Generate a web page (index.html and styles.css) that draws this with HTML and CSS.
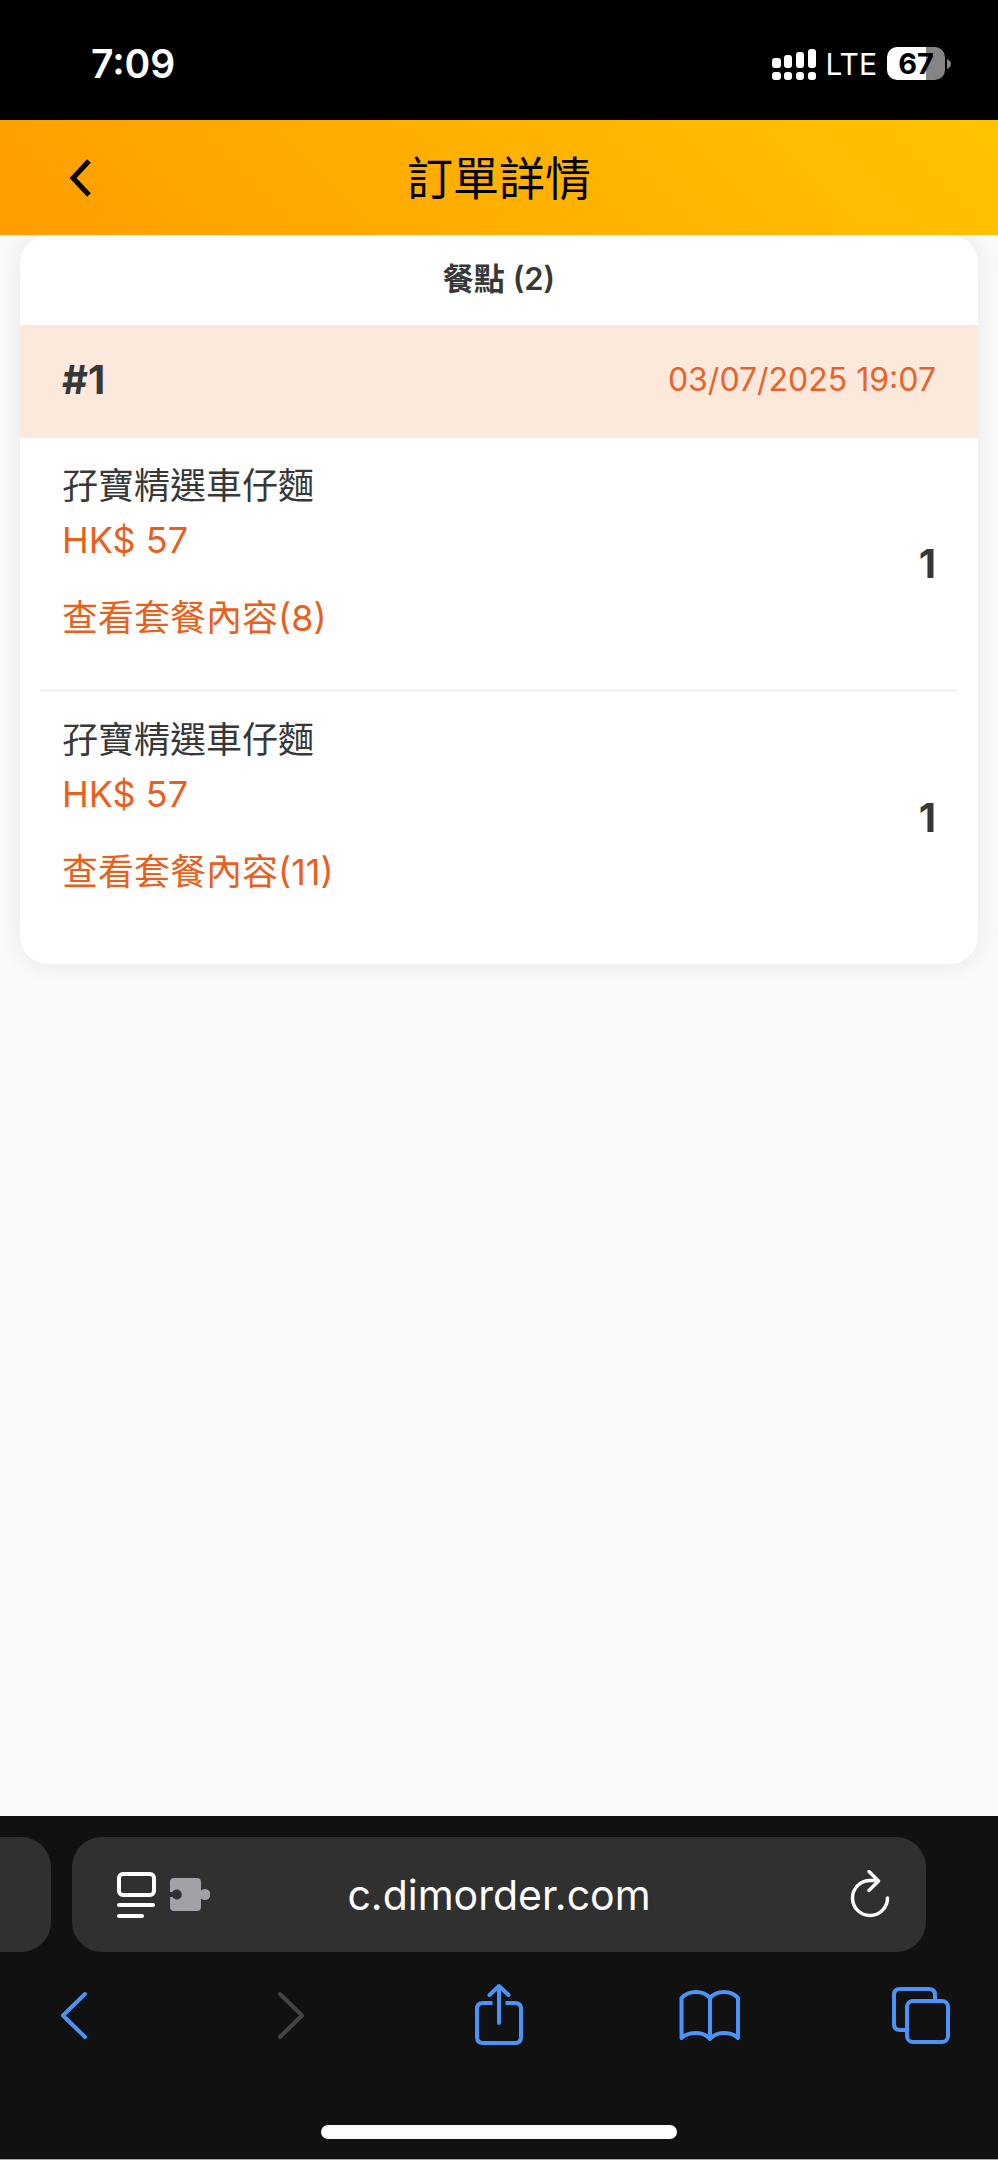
FILE: index.html
```html
<!DOCTYPE html>
<html lang="zh-Hant">
<head>
<meta charset="utf-8">
<meta name="viewport" content="width=device-width, initial-scale=1">
<title>訂單詳情</title>
<link rel="stylesheet" href="styles.css">
</head>
<body>
<div class="status">
  <time class="status-time">7:09</time>
  <div class="status-right">
    <svg class="signal" width="44" height="32" viewBox="0 0 44 32" fill="#fff" aria-hidden="true">
      <rect x="0" y="10" width="9" height="10" rx="3"/><rect x="12" y="7" width="8" height="13" rx="3"/><rect x="24" y="4" width="8" height="16" rx="3"/><rect x="36" y="1" width="8" height="19" rx="3"/>
      <rect x="0" y="24" width="9" height="8" rx="3"/><rect x="12" y="24" width="8" height="8" rx="3"/><rect x="24" y="24" width="8" height="8" rx="3"/><rect x="36" y="24" width="8" height="8" rx="3"/>
    </svg>
    <span class="network">LTE</span>
    <div class="battery">
      <span class="battery-level">67</span>
      <svg width="4" height="10" viewBox="0 0 4 10" aria-hidden="true"><path d="M0 0Q4 2 4 5T0 10Z" fill="#858585"/></svg>
    </div>
  </div>
</div>

<header class="header">
  <button class="header-back" type="button" aria-label="返回">
    <svg width="24" height="38" viewBox="0 0 24 38" fill="none" stroke="#000" stroke-width="5" aria-hidden="true"><path d="M20 2 4 19 20 36"/></svg>
  </button>
  <h1 class="header-title">訂單詳情</h1>
</header>

<main class="content">
  <section class="card">
    <h2 class="card-title">餐點 (2)</h2>
    <div class="batch">
      <strong class="batch-number">#1</strong>
      <time class="batch-time">03/07/2025 19:07</time>
    </div>
    <ul class="items">
      <li class="item">
        <div class="item-info">
          <div class="item-name">孖寶精選車仔麵</div>
          <div class="item-price">HK$ 57</div>
          <button class="item-more" type="button">查看套餐內容(8)</button>
        </div>
        <strong class="item-count">1</strong>
      </li>
      <li class="item">
        <div class="item-info">
          <div class="item-name">孖寶精選車仔麵</div>
          <div class="item-price">HK$ 57</div>
          <button class="item-more" type="button">查看套餐內容(11)</button>
        </div>
        <strong class="item-count">1</strong>
      </li>
    </ul>
  </section>
</main>

<footer class="browser">
  <div class="tabs">
    <div class="tab-previous"></div>
    <div class="address">
      <button class="page-menu" type="button" aria-label="頁面選單">
        <svg width="94" height="48" viewBox="0 0 94 48" aria-hidden="true">
          <g fill="none" stroke="#fff" stroke-linecap="round">
            <rect x="3" y="3" width="35" height="21" rx="4" stroke-width="4"/>
            <path d="M3 34H37M3 45H26" stroke-width="4"/>
          </g>
          <path fill="#a2a1a8" d="M58 7H81Q85 7 85 11V19.500Q86.500 18 89 18A5.500 5.500 0 0 1 89 29Q86.500 29 85 27.500V36Q85 40 81 40H58Q54 40 54 36V26H56.500A5 5 0 1 0 56.500 21H54V11Q54 7 58 7Z"/>
        </svg>
      </button>
      <input class="address-input" type="text" aria-label="網址" value="c.dimorder.com">
      <button class="reload" type="button" aria-label="重新載入">
        <svg width="40" height="50" viewBox="0 0 40 50" fill="none" stroke="#fff" stroke-width="3.500" stroke-linecap="round" stroke-linejoin="round" aria-hidden="true"><path d="M37.500 28A17.500 17.500 0 1 1 20 10.500H28M19 1.500 28.500 11 19 20.500"/></svg>
      </button>
    </div>
  </div>
  <nav class="toolbar" aria-label="瀏覽器工具列">
    <button class="tool" type="button" aria-label="上一頁">
      <svg viewBox="0 0 62 64"><path d="M42 12 20 33.500 42 55"/></svg>
    </button>
    <button class="tool tool-off" type="button" aria-label="下一頁" disabled>
      <svg viewBox="0 0 62 64"><path d="M25 12 47 33.500 25 55"/></svg>
    </button>
    <button class="tool" type="button" aria-label="分享">
      <svg viewBox="0 0 62 64"><path d="M32 41V4M22.500 13 32 4 41.500 13"/><path stroke-linecap="butt" d="M25.500 21H16Q10 21 10 27V55Q10 61 16 61H48Q54 61 54 55V27Q54 21 48 21H38.500"/></svg>
    </button>
    <button class="tool" type="button" aria-label="書籤">
      <svg viewBox="0 0 62 64"><path d="M32 16Q27 10 18 10Q9 10 3.500 16V56Q9 51 18 51Q27 51 32 57Q37 51 46 51Q55 51 60 56V16Q55 10 46 10Q37 10 32 16V57"/></svg>
    </button>
    <button class="tool" type="button" aria-label="分頁">
      <svg viewBox="0 0 62 64"><rect x="17" y="19" width="41" height="41" rx="6"/><path stroke-linecap="butt" d="M17 48H10Q4 48 4 42V13Q4 7 10 7H39Q45 7 45 13V19"/></svg>
    </button>
  </nav>
  <div class="home-indicator"></div>
</footer>
</body>
</html>
```
FILE: styles.css
```css
* {
  box-sizing: border-box;
}

body {
  margin: 0;
  min-height: 100vh;
  display: flex;
  flex-direction: column;
  background: #fafafa;
  color: #383838;
  font-family: Inter, "Noto Sans CJK TC", sans-serif;
}

button,
input {
  padding: 0;
  border: 0;
  background: none;
  color: inherit;
  font: inherit;
}

button {
  display: block;
}

svg {
  display: block;
}

h1,
h2,
ul {
  margin: 0;
  padding: 0;
}

/* Status bar */
.status {
  display: flex;
  justify-content: space-between;
  align-items: center;
  height: 120px;
  padding: 7px 47px 0 91px;
  background: #000;
  color: #fff;
}

.status-time {
  font-size: 39px;
  font-weight: 600;
}

.status-right {
  display: flex;
  align-items: center;
  gap: 10px;
}

.network {
  font-size: 30px;
  font-weight: 400;
}

.battery {
  display: flex;
  align-items: center;
  gap: 2px;
}

.battery-level {
  width: 58px;
  border-radius: 10px;
  background: linear-gradient(90deg, #fff 67%, #858585 67%);
  color: #000;
  font-size: 29px;
  font-weight: 700;
  line-height: 33px;
  text-align: center;
}

/* Page header */
.header {
  z-index: 1;
  display: grid;
  grid-template-columns: 1fr auto 1fr;
  align-items: center;
  height: 115px;
  padding: 0 69px;
  background: linear-gradient(45deg, #ff9d00, #ffc400);
  color: #000;
}

.header-title {
  font-size: 46px;
  font-weight: 400;
  line-height: 60px;
}

/* Order card */
.content {
  flex: 1;
  padding: 0 20px;
}

.card {
  overflow: hidden;
  padding-bottom: 18px;
  border-radius: 28px;
  background: #fff;
  box-shadow: 0 0 24px rgba(0, 0, 0, 0.08);
}

.card-title {
  padding: 20px 0 22px;
  font-size: 31px;
  font-weight: 600;
  line-height: 48px;
  text-align: center;
}

.batch {
  display: flex;
  justify-content: space-between;
  align-items: center;
  height: 113px;
  padding: 0 42px 4px;
  background: #fce9db;
}

.batch-number,
.item-count {
  font-size: 40px;
  font-weight: 700;
}

.batch-time {
  color: #e8622a;
  font-size: 32px;
}

.items {
  padding: 0 20px;
  list-style: none;
}

.item {
  display: flex;
  justify-content: space-between;
  align-items: center;
  padding: 21px 22px 44px;
  border-bottom: 3px solid #f5f5f5;
  font-size: 36px;
  line-height: 54px;
}

.item:last-child {
  border-color: transparent;
}

.item-price,
.item-more {
  color: #e95f1c;
}

.item-more {
  margin-top: 24px;
}

.item-count {
  margin-top: 24px;
}

/* Browser controls */
.browser {
  padding: 21px 0 20px;
  border-bottom: 1px solid #a8a8a8;
  background: #111;
}

.tabs {
  display: flex;
  gap: 21px;
  padding-right: 72px;
}

.tab-previous {
  width: 51px;
  border-radius: 0 30px 30px 0;
  background: #303030;
}

.address {
  flex: 1;
  display: grid;
  grid-template-columns: 1fr 2fr 1fr;
  align-items: center;
  height: 115px;
  padding: 0 36px 0 44px;
  border-radius: 30px;
  background: #303030;
  color: #fff;
}

.address-input {
  min-width: 0;
  padding-right: 8px;
  font-size: 41px;
  text-align: center;
}

.reload {
  justify-self: end;
}

.toolbar {
  display: flex;
  justify-content: space-between;
  padding: 30px 46px 0 43px;
}

.tool {
  width: 62px;
  color: #4a94f7;
}

.tool-off {
  color: #444;
}

.tool svg {
  fill: none;
  stroke: currentColor;
  stroke-width: 4;
  stroke-linecap: round;
  stroke-linejoin: round;
}

.home-indicator {
  width: 356px;
  height: 14px;
  margin: 79px auto 0;
  border-radius: 7px;
  background: #fff;
}
```
